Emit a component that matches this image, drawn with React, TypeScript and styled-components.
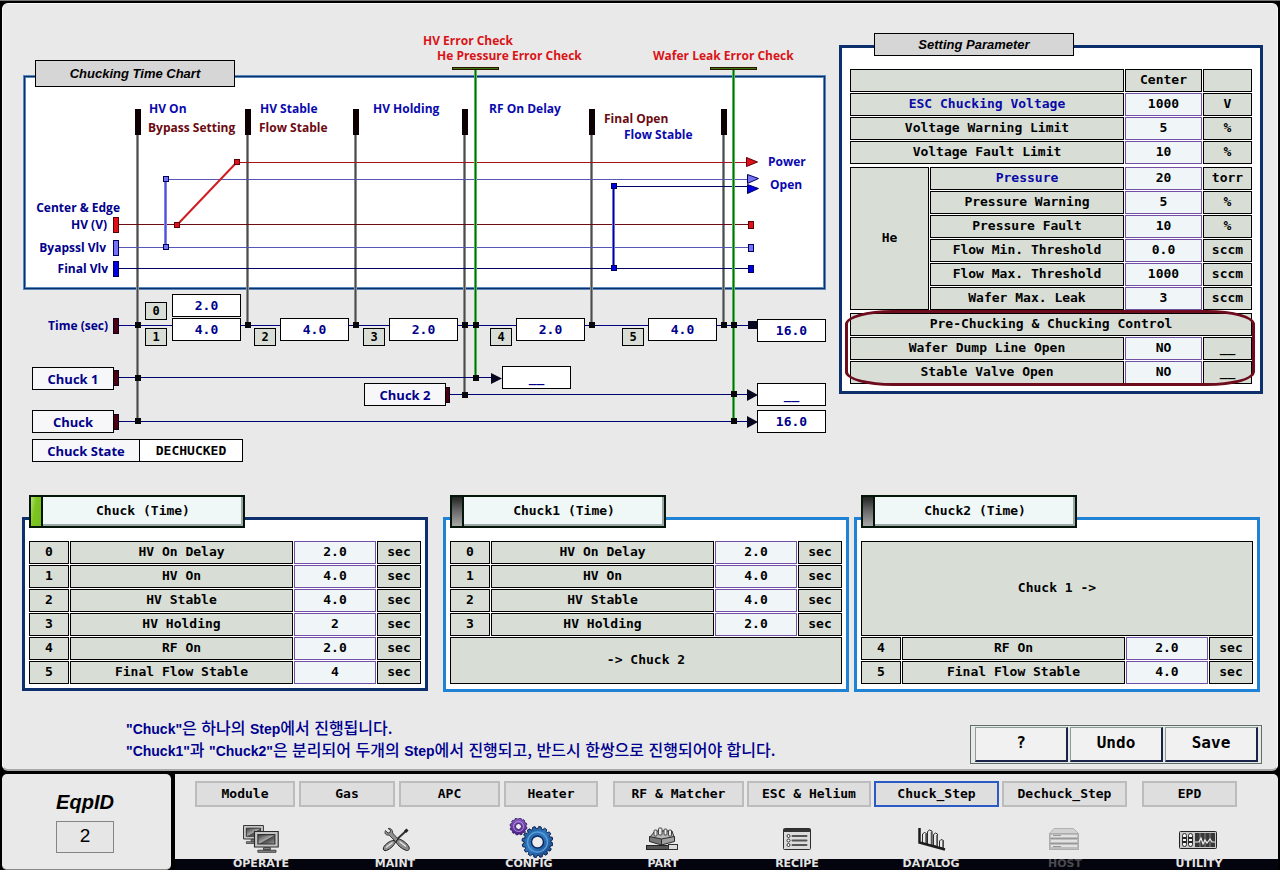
import React from "react";
import styled, { createGlobalStyle } from "styled-components";

const mono = `"DejaVu Sans Mono", "Liberation Mono", monospace`;
const sans = `"Liberation Sans", Arial, sans-serif`;
const label = `"Open Sans", "Noto Sans", sans-serif`;

const navy = "#0d2f6b";
const ink = "#00008b";

const GlobalStyle = createGlobalStyle`
  *, *::before, *::after { box-sizing: border-box; }
  body { margin: 0; background: #000; color: #000; font-family: ${mono}; }
  button, input { font: inherit; color: inherit; margin: 0; }
`;

const Screen = styled.div`
  display: flex;
  flex-direction: column;
  gap: 3px;
  min-height: 100vh;
  padding: 2px 2px 0;
  border-top: 1px solid #777;
`;

const Main = styled.main`
  flex: 1;
  display: flex;
  flex-direction: column;
  padding: 26px 0 5px;
  border-radius: 6px;
  border: 1px solid #f8f8f8;
  border-bottom: 2px solid #a8a8a8;
  background: #e9e9e9;
`;

const TopRow = styled.div`
  display: flex;
  align-items: flex-start;
  gap: 11px;
  padding: 0 14px 0 19px;
`;

/* ---------- time chart ---------- */

const Canvas = styled.section`
  position: relative;
  flex: 0 0 806px;
  height: 440px;
`;

const Caption = styled.h2<{ $tall?: boolean }>`
  margin: 0;
  display: flex;
  align-items: center;
  justify-content: center;
  width: 200px;
  height: ${(p) => (p.$tall ? 27 : 23)}px;
  border: 1px solid #000;
  background: #d6d6d6;
  font: italic bold 13px ${sans};
`;

const ChartCaption = styled(Caption)`
  position: absolute;
  left: 13px;
  top: 30px;
`;

const ChartFrame = styled.div`
  position: absolute;
  left: 2px;
  top: 46px;
  width: 801px;
  height: 213px;
  border: 1px solid #0a3068;
  box-shadow: 0 0 0 1px #5b87bd, inset 0 0 0 1px #5b87bd;
  background: #fff;
`;

const Drawing = styled.svg`
  position: absolute;
  inset: 0;
  width: 806px;
  height: 440px;
`;

const Note = styled.span<{ $x: number; $y: number; $color?: string; $end?: boolean }>`
  position: absolute;
  left: ${(p) => p.$x - 22}px;
  top: ${(p) => p.$y - 38}px;
  transform: ${(p) => (p.$end ? "translateX(-100%)" : "none")};
  font: bold 12px/16px ${label};
  white-space: nowrap;
  color: ${(p) => p.$color ?? ink};
`;

const Tile = styled.div<{ $x: number; $y: number; $w?: number }>`
  position: absolute;
  left: ${(p) => p.$x - 22}px;
  top: ${(p) => p.$y - 30}px;
  width: ${(p) => p.$w ?? 69}px;
  height: 23px;
  display: flex;
  align-items: center;
  justify-content: center;
  border: 1px solid #000;
  background: #fff;
`;

const TimeTile = styled(Tile)`
  color: ${ink};
  font: bold 13px ${mono};
`;

const StateTile = styled(Tile)`
  font: bold 13px ${mono};
`;

const NameTile = styled(Tile)`
  background: #f7f7f9;
  color: ${ink};
  font: bold 13px ${label};
`;

const StepTile = styled(Tile)`
  width: 22px;
  height: 18px;
  background: #d8ded6;
  font: bold 12px ${mono};
`;

const posts = [
  { x: 138, end: 421 },
  { x: 248, end: 325 },
  { x: 356, end: 325 },
  { x: 465, end: 395 },
  { x: 592, end: 325 },
  { x: 724, end: 325 },
];

const joints: [number, number][] = [
  [138, 325], [248, 325], [356, 325], [465, 325], [476, 325], [592, 325], [724, 325], [734, 325],
  [138, 378], [476, 378], [465, 395], [734, 394], [138, 421], [734, 421],
];

const Lines = () => (
  <Drawing viewBox="22 30 806 440" aria-hidden="true">
    {posts.map((p) => (
      <g key={p.x}>
        <rect x={p.x - 2} y={135} width={3} height={p.end - 135} fill="#8d8d8d" />
        <rect x={p.x - 1} y={135} width={1} height={p.end - 135} fill="#4c4c4c" />
        <rect x={p.x - 3} y={109} width={6} height={26} fill="#0c0003" />
      </g>
    ))}
    <g shapeRendering="crispEdges">
      <rect x={119} y={325} width={629} height={1} fill="#000080" />
      <rect x={119} y={377} width={373} height={1} fill="#000070" />
      <rect x={450} y={394} width={300} height={1} fill="#000070" />
      <rect x={119} y={421} width={630} height={1} fill="#000070" />
      <rect x={237} y={162} width={510} height={1} fill="#a8141c" />
      <rect x={119} y={224} width={629} height={1} fill="#6b0c14" />
      <rect x={166} y={179} width={582} height={1} fill="#5656b4" />
      <rect x={119} y={247} width={629} height={1} fill="#5656b4" />
      <rect x={614} y={186} width={134} height={1} fill="#000068" />
      <rect x={119} y={268} width={629} height={1} fill="#000060" />
      <rect x={164} y={180} width={3} height={67} fill="#7f7fee" />
      <rect x={165} y={180} width={1} height={67} fill="#5252cc" />
      <rect x={612} y={187} width={3} height={81} fill="#6f6fd6" />
      <rect x={613} y={187} width={1} height={81} fill="#0000a0" />
    </g>
    <path d="M177 225 237 162" stroke="#cf1c22" strokeWidth="2" />
    {[
      { x: 475, end: 378, cap: 452 },
      { x: 733, end: 421, cap: 710 },
    ].map((g) => (
      <g key={g.x}>
        <rect x={g.x - 1} y={69} width={3} height={g.end - 69} fill="#55b455" />
        <rect x={g.x} y={69} width={1} height={g.end - 69} fill="#00720c" />
        <rect x={g.cap} y={67} width={47} height={3} fill="#2a1400" />
        <rect x={g.cap + 1} y={68} width={45} height={1} fill="#3d7a10" />
      </g>
    ))}
    <g stroke="#5a0008" fill="#e0101a">
      <rect x={234.5} y={159.5} width={5} height={5} />
      <rect x={174.5} y={222.5} width={5} height={5} />
      <rect x={113.5} y={217.5} width={5} height={15} />
      <rect x={748.5} y={221.5} width={5} height={7} />
      <path d="M746.5 157.5 757.5 162 746.5 166.5Z" />
    </g>
    <g stroke="#00005c" fill="#7474f4">
      <rect x={163.5} y={176.5} width={5} height={5} />
      <rect x={163.5} y={244.5} width={5} height={5} />
      <rect x={113.5} y={240.5} width={5} height={15} />
      <rect x={748.5} y={244.5} width={5} height={7} />
      <path d="M747.5 174.5 758.5 178.5 747.5 183.5Z" />
    </g>
    <g stroke="#00005c" fill="#0000e0">
      <rect x={611.5} y={183.5} width={5} height={5} />
      <rect x={611.5} y={265.5} width={5} height={5} />
      <rect x={113.5} y={261.5} width={5} height={15} />
      <rect x={748.5} y={265.5} width={5} height={7} />
      <path d="M747.5 184.5 758.5 188.5 747.5 193.5Z" />
    </g>
    <g stroke="#10001c" fill="#4a0010">
      <rect x={113.5} y={318.5} width={5} height={15} />
      <rect x={113.5} y={370.5} width={5} height={15} />
      <rect x={113.5} y={414.5} width={5} height={15} />
      <rect x={445.5} y={387.5} width={4} height={15} />
    </g>
    <g fill="#07071f">
      <rect x={748} y={321} width={9} height={8} />
      <path d="M491 373 502 378.5 491 384Z" />
      <path d="M747 389 758 395 747 401Z" />
      <path d="M747 416 758 422 747 428Z" />
      {joints.map(([x, y]) => (
        <rect key={`${x}-${y}`} x={x - 3} y={y - 3} width={6} height={6} fill="#080808" />
      ))}
    </g>
  </Drawing>
);

const blue = "#0909ae";
const maroon = "#6b0a10";
const red = "#d91418";

const TimeChart = () => (
  <Canvas aria-label="Chucking Time Chart">
    <ChartFrame />
    <ChartCaption $tall>Chucking Time Chart</ChartCaption>
    <Lines />
    <Note $x={423} $y={41} $color={red}>HV Error Check</Note>
    <Note $x={437} $y={56} $color={red}>He Pressure Error Check</Note>
    <Note $x={653} $y={56} $color={red}>Wafer Leak Error Check</Note>
    <Note $x={149} $y={109} $color={blue}>HV On</Note>
    <Note $x={148} $y={128} $color={maroon}>Bypass Setting</Note>
    <Note $x={260} $y={109} $color={blue}>HV Stable</Note>
    <Note $x={259} $y={128} $color={maroon}>Flow Stable</Note>
    <Note $x={373} $y={109} $color={blue}>HV Holding</Note>
    <Note $x={489} $y={109} $color={blue}>RF On Delay</Note>
    <Note $x={604} $y={119} $color={maroon}>Final Open</Note>
    <Note $x={624} $y={135} $color={blue}>Flow Stable</Note>
    <Note $x={768} $y={162} $color={blue}>Power</Note>
    <Note $x={770} $y={185} $color={blue}>Open</Note>
    <Note $x={120} $y={208} $end>Center &amp; Edge</Note>
    <Note $x={107} $y={225} $end>HV (V)</Note>
    <Note $x={106} $y={248} $end>Byapssl Vlv</Note>
    <Note $x={108} $y={269} $end>Final Vlv</Note>
    <Note $x={108} $y={326} $end>Time (sec)</Note>

    <StepTile $x={145} $y={302}>0</StepTile>
    <StepTile $x={145} $y={328}>1</StepTile>
    <StepTile $x={254} $y={328}>2</StepTile>
    <StepTile $x={363} $y={328}>3</StepTile>
    <StepTile $x={490} $y={328}>4</StepTile>
    <StepTile $x={622} $y={328}>5</StepTile>
    <TimeTile $x={172} $y={294}>2.0</TimeTile>
    <TimeTile $x={172} $y={318}>4.0</TimeTile>
    <TimeTile $x={280} $y={318}>4.0</TimeTile>
    <TimeTile $x={389} $y={318}>2.0</TimeTile>
    <TimeTile $x={516} $y={318}>2.0</TimeTile>
    <TimeTile $x={648} $y={318}>4.0</TimeTile>
    <TimeTile $x={757} $y={319}>16.0</TimeTile>
    <TimeTile $x={502} $y={366}>__</TimeTile>
    <TimeTile $x={757} $y={383}>__</TimeTile>
    <TimeTile $x={757} $y={410}>16.0</TimeTile>
    <NameTile $x={32} $y={367} $w={82}>Chuck 1</NameTile>
    <NameTile $x={364} $y={383} $w={82}>Chuck 2</NameTile>
    <NameTile $x={32} $y={410} $w={82}>Chuck</NameTile>
    <NameTile $x={32} $y={439} $w={108}>Chuck State</NameTile>
    <StateTile $x={139} $y={439} $w={104}>DECHUCKED</StateTile>
  </Canvas>
);

/* ---------- tables ---------- */

const Frame = styled.section<{ $color: string }>`
  position: relative;
  border: 3px solid ${(p) => p.$color};
  background: #fff;
`;

const Table = styled.table`
  width: 100%;
  table-layout: fixed;
  border-collapse: separate;
  border-spacing: 1px;
  font: bold 13px ${mono};
`;

const Cell = styled.td<{ $accent?: boolean }>`
  height: 23px;
  padding: 0 0 2px;
  border: 1px solid #000;
  background: #d8ded6;
  color: ${(p) => (p.$accent ? "#0a0aa8" : "#000")};
  font-weight: bold;
  line-height: 16px;
  text-align: center;
`;

const Plain = styled.td`
  padding: 0;
  height: 23px;
`;

const Field = styled.input`
  display: block;
  width: 100%;
  height: 23px;
  padding: 0 0 2px;
  border: 1px solid #7450a4;
  border-radius: 0;
  background: #f0f6f8;
  text-align: center;
`;

const ValueCell = ({ name, value }: { name: string; value: string }) => (
  <Plain>
    <Field aria-label={name} defaultValue={value} />
  </Plain>
);

const ParamFrame = styled(Frame)`
  flex: 1;
  margin-top: 15px;
  padding: 20px 7px 6px;
`;

const ParamCaption = styled(Caption)`
  position: absolute;
  left: 32px;
  top: -15px;
`;

const Stack = styled.div`
  display: flex;
  flex-direction: column;
  gap: 1px;
`;

const Ringed = styled.div`
  position: relative;

  &::after {
    content: "";
    position: absolute;
    inset: -2px -2px -1px -4px;
    border: 3px solid #6e0b1c;
    border-radius: 48px / 14px;
    pointer-events: none;
  }
`;

type Param = { name: string; value: string; unit: string; accent?: boolean };

const voltage: Param[] = [
  { name: "ESC Chucking Voltage", value: "1000", unit: "V", accent: true },
  { name: "Voltage Warning Limit", value: "5", unit: "%" },
  { name: "Voltage Fault Limit", value: "10", unit: "%" },
];

const helium: Param[] = [
  { name: "Pressure", value: "20", unit: "torr", accent: true },
  { name: "Pressure Warning", value: "5", unit: "%" },
  { name: "Pressure Fault", value: "10", unit: "%" },
  { name: "Flow Min. Threshold", value: "0.0", unit: "sccm" },
  { name: "Flow Max. Threshold", value: "1000", unit: "sccm" },
  { name: "Wafer Max. Leak", value: "3", unit: "sccm" },
];

const control: Param[] = [
  { name: "Wafer Dump Line Open", value: "NO", unit: "__" },
  { name: "Stable Valve Open", value: "NO", unit: "__" },
];

const ParamCells = ({ p }: { p: Param }) => (
  <>
    <Cell as="th" scope="row" $accent={p.accent}>{p.name}</Cell>
    <ValueCell name={p.name} value={p.value} />
    <Cell>{p.unit}</Cell>
  </>
);

const Widths = ({ of }: { of: (number | undefined)[] }) => (
  <colgroup>
    {of.map((w, i) => (
      <col key={i} width={w} />
    ))}
  </colgroup>
);

const Parameters = () => (
  <ParamFrame $color={navy}>
    <ParamCaption>Setting Parameter</ParamCaption>
    <Stack>
      <Table>
        <Widths of={[undefined, 77, 49]} />
        <thead>
          <tr>
            <Cell />
            <Cell as="th" scope="col">Center</Cell>
            <Cell />
          </tr>
        </thead>
        <tbody>
          {voltage.map((p) => (
            <tr key={p.name}><ParamCells p={p} /></tr>
          ))}
        </tbody>
      </Table>
      <Table>
        <Widths of={[79, undefined, 77, 49]} />
        <tbody>
          {helium.map((p, i) => (
            <tr key={p.name}>
              {i === 0 && <Cell as="th" scope="rowgroup" rowSpan={helium.length}>He</Cell>}
              <ParamCells p={p} />
            </tr>
          ))}
        </tbody>
      </Table>
      <Ringed>
        <Table>
          <Widths of={[undefined, 77, 49]} />
          <thead>
            <tr>
              <Cell as="th" colSpan={3}>Pre-Chucking &amp; Chucking Control</Cell>
            </tr>
          </thead>
          <tbody>
            {control.map((p) => (
              <tr key={p.name}><ParamCells p={p} /></tr>
            ))}
          </tbody>
        </Table>
      </Ringed>
    </Stack>
  </ParamFrame>
);

/* ---------- chuck step panels ---------- */

const Panels = styled.div`
  display: flex;
  align-items: flex-start;
  gap: 5px;
  margin-top: 47px;
  padding: 0 17px 0 19px;
`;

const StepFrame = styled(Frame)<{ $active?: boolean }>`
  flex: 1;
  margin-right: ${(p) => (p.$active ? 10 : 0)}px;
  padding: 20px 3px ${(p) => (p.$active ? 3 : 4)}px;
`;

const Tab = styled.button`
  position: absolute;
  left: 4px;
  top: -25px;
  display: flex;
  width: 216px;
  height: 33px;
  padding: 0;
  border: 2px solid #04150a;
  background: #04150a;
  gap: 2px;
  font: bold 13px ${mono};
`;

const Lamp = styled.span<{ $on?: boolean }>`
  width: 10px;
  height: 29px;
  background: ${(p) =>
    p.$on
      ? "linear-gradient(100deg, #b6e07a, #7cc61e 40%, #78bc20)"
      : "linear-gradient(#222, #666 45%, #a8a8a8)"};
`;

const Face = styled.span`
  flex: 1;
  height: 29px;
  padding-left: 2px;
  border-right: 2px solid #9ca8a8;
  border-bottom: 2px solid #9ca8a8;
  background: #f0f7f7;
  line-height: 28px;
  text-align: center;
`;

type Step = { no: number; name: string; value: string };

const StepRow = ({ s }: { s: Step }) => (
  <tr>
    <Cell>{s.no}</Cell>
    <Cell as="th" scope="row">{s.name}</Cell>
    <ValueCell name={s.name} value={s.value} />
    <Cell>sec</Cell>
  </tr>
);

const Block = styled(Cell)<{ $rows: number }>`
  height: ${(p) => p.$rows * 24 - 1}px;
`;

type StepPanelProps = {
  title: string;
  active?: boolean;
  steps: Step[];
  before?: { text: string; rows: number };
  after?: { text: string; rows: number };
};

const StepPanel = ({ title, active, steps, before, after }: StepPanelProps) => (
  <StepFrame $color={active ? navy : "#1f82d4"} $active={active}>
    <Tab type="button" aria-pressed={!!active}>
      <Lamp $on={active} />
      <Face>{title}</Face>
    </Tab>
    <Table>
      <Widths of={[40, undefined, 82, 44]} />
      <tbody>
        {before && <tr><Block colSpan={4} $rows={before.rows}>{before.text}</Block></tr>}
        {steps.map((s) => <StepRow key={s.no} s={s} />)}
        {after && <tr><Block colSpan={4} $rows={after.rows}>{after.text}</Block></tr>}
      </tbody>
    </Table>
  </StepFrame>
);

/* ---------- footer of the main pane ---------- */

const Foot = styled.div`
  display: flex;
  justify-content: space-between;
  align-items: flex-start;
  margin-top: 24px;
  padding: 0 15px 0 123px;
`;

const Message = styled.p`
  margin: 0;
  color: #00008f;
  font: 500 16px/22px "Noto Sans CJK KR", sans-serif;

  b {
    font: bold 14px/14px ${sans};
  }
`;

const Actions = styled.div`
  display: flex;
  gap: 2px;
  margin-top: 9px;
  padding: 1px 3px 1px 4px;
  border: 1px solid #5d6f68;
`;

const Action = styled.button`
  width: 93px;
  height: 35px;
  padding: 0 0 3px;
  border: 1px solid #8b9e95;
  border-right: 2px solid #1a2348;
  border-bottom: 2px solid #1a2348;
  background: #f1f1f1;
  font: bold 16px ${mono};
`;

/* ---------- bottom bar ---------- */

const Bottom = styled.footer`
  display: flex;
  gap: 4px;
  height: 96px;
`;

const Equipment = styled.div`
  flex: 0 0 169px;
  display: flex;
  flex-direction: column;
  align-items: center;
  gap: 7px;
  padding: 16px 3px 0 0;
  border-radius: 5px;
  border-bottom: 1px solid #888;
  background: #e9e9e9;
  font-family: ${sans};

  label {
    font: italic bold 20px/24px ${sans};
  }

  input {
    width: 58px;
    height: 32px;
    padding: 0 0 3px;
    border: 1px solid #858585;
    border-radius: 0;
    background: #e6e6e6;
    font-size: 19px;
    text-align: center;
  }
`;

const Nav = styled.nav`
  flex: 1;
  display: flex;
  flex-direction: column;
  justify-content: space-between;
  padding-top: 7px;
  border-top-right-radius: 5px;
  background: linear-gradient(to top, #04040f 11px, #e9e9e9 11px);
`;

const SubNav = styled.div`
  display: flex;
  gap: 15px;
  padding: 0 20px;
`;

const Group = styled.div<{ $gap: number }>`
  display: flex;
  gap: ${(p) => p.$gap}px;
`;

const SubButton = styled.button<{ $w: number; $current?: boolean }>`
  width: ${(p) => p.$w}px;
  height: 26px;
  padding: 0 0 2px;
  border: 2px solid ${(p) => (p.$current ? "#2a5ac2" : "#bcbcbc")};
  background: #dedede;
  font: bold 13px ${mono};
  white-space: nowrap;
`;

const MainNav = styled.div`
  display: grid;
  grid-template-columns: repeat(8, 1fr);
  padding: 0 12px 0 19px;
`;

const NavItem = styled.button<{ $dim?: boolean }>`
  display: flex;
  flex-direction: column;
  align-items: center;
  height: 52px;
  padding: 0 0 1px;
  border: 0;
  background: none;
  color: ${(p) => (p.$dim ? "#4a4a4e" : "#e4e4e4")};
  font: bold 11px/11px "DejaVu Sans", sans-serif;

  svg {
    width: 48px;
    height: 40px;
  }
`;

const gear = (cx: number, cy: number, teeth: number, outer: number, inner: number) => {
  const pts: string[] = [];
  for (let i = 0; i < teeth; i++) {
    [[0.05, inner], [0.2, outer], [0.6, outer], [0.75, inner]].forEach(([f, r]) => {
      const a = ((i + f) / teeth) * Math.PI * 2;
      pts.push(`${(cx + Math.cos(a) * r).toFixed(1)} ${(cy + Math.sin(a) * r).toFixed(1)}`);
    });
  }
  return `M${pts.join("L")}Z`;
};

const Monitor = () => (
  <>
    <path d="M0 0h21v15h-21z" fill="#c4c4c4" stroke="#2c2c2c" />
    <path d="M3 3h15v9h-15z" fill="url(#glass)" stroke="#333" />
    <path d="M8 15.500h6v2h-6zM3 18h16v2h-16z" fill="#8a8a8a" stroke="#333" strokeWidth=".8" />
  </>
);

const OperateIcon = () => (
  <svg viewBox="0 0 48 40" aria-hidden="true">
    <defs>
      <linearGradient id="glass" x2="1" y2="1">
        <stop offset="0" stopColor="#3a3a3a" />
        <stop offset=".5" stopColor="#a6a6a6" />
        <stop offset=".55" stopColor="#4a4a4a" />
        <stop offset="1" stopColor="#999" />
      </linearGradient>
    </defs>
    <g transform="translate(6.500 7.500) scale(.95 .9)"><Monitor /></g>
    <g transform="translate(17.500 13.500) scale(1.130 1.040)"><Monitor /></g>
  </svg>
);

const MaintIcon = () => (
  <svg viewBox="0 0 48 40" aria-hidden="true">
    <path d="M36 12 22 25" stroke="#333" strokeWidth="2" />
    <path d="M36.500 11.500 34 14" stroke="#222" strokeWidth="3" />
    <path d="M23 22.500c-3-.5-9 3.500-10.500 7-.8 2.300.8 3.800 3 3 3.600-1.300 7.800-5 9-8.500z" fill="#8f8f8f" stroke="#222" />
    <path d="M15 29.500 21.500 24.500" stroke="#e0e0e0" strokeWidth="1.500" />
    <path d="M14.500 12.500 17 15l2-.5.500-2.500-2.500-1.500c2.500-.6 5 1.200 4.600 4.500L27 21l-2.500 2.500-6.500-6.500c-3 .6-5-1.500-3.500-4.500z" fill="#8f8f8f" stroke="#333" strokeWidth=".9" />
    <path d="M27 21c3.500 0 9 4 11 8 1 2.500-.8 4.200-3.200 3.300-4-1.500-8.300-5-9.800-8.300z" fill="#8a8a8a" stroke="#222" />
    <path d="M28.500 23.500 35 28.500" stroke="#e4e4e4" strokeWidth="1.500" />
  </svg>
);

const ConfigIcon = () => (
  <svg viewBox="0 0 48 40" aria-hidden="true">
    <defs>
      <linearGradient id="steel" x2="1" y2="1">
        <stop offset="0" stopColor="#1c5690" />
        <stop offset=".5" stopColor="#2f78c0" />
        <stop offset="1" stopColor="#123a78" />
      </linearGradient>
      <linearGradient id="violet" x2="0" y2="1">
        <stop offset="0" stopColor="#8a62c2" />
        <stop offset="1" stopColor="#4b1f8a" />
      </linearGradient>
    </defs>
    <path d={gear(13.5, 8.5, 12, 8.5, 7.5)} fill="url(#violet)" stroke="#2d0f5c" strokeWidth=".8" />
    <circle cx="13.500" cy="8.500" r="5" fill="none" stroke="#b48ce0" strokeWidth="1" />
    <circle cx="13.500" cy="8.500" r="3" fill="#eee" stroke="#35146a" />
    <path d={gear(32.5, 24, 16, 15.5, 13.5)} fill="url(#steel)" stroke="#0a1f4e" strokeWidth="1" />
    <circle cx="32.500" cy="24" r="10" fill="none" stroke="#5a9ad8" strokeWidth="1.500" />
    <circle cx="32.500" cy="24" r="6" fill="#ececec" stroke="#0c2a60" strokeWidth="1.500" />
  </svg>
);

const PartIcon = () => (
  <svg viewBox="0 0 48 40" aria-hidden="true">
    <path d="M11 19 16 13 33 13 35 19 23 23Z" fill="#b8b8b8" stroke="#333" />
    <g fill="#eaeaea" stroke="#333" strokeWidth=".9">
      <rect x="15" y="12" width="3" height="6" rx="1" />
      <rect x="19.500" y="10" width="3.500" height="7" rx="1" />
      <rect x="25" y="11" width="3" height="6" rx="1" />
      <rect x="29.500" y="12" width="3" height="6" rx="1" />
    </g>
    <path d="M10.500 18.500 22.500 21v6L10.500 23.500Z" fill="#777" stroke="#2a2a2a" />
    <path d="M22.500 21 35.500 18.500v5L22.500 27Z" fill="#a0a0a0" stroke="#2a2a2a" />
    <rect x="7.500" y="27.500" width="22" height="4" fill="#555" stroke="#222" />
    <rect x="29.500" y="26.500" width="9" height="5" fill="#ddd" stroke="#333" />
  </svg>
);

const RecipeIcon = () => (
  <svg viewBox="0 0 48 40" aria-hidden="true">
    <rect x="10.500" y="10.500" width="27" height="21" rx="1" fill="#dcdcdc" stroke="#2c2c2c" />
    <path d="M10.500 12.500h27" stroke="#333" strokeWidth="3" />
    <path d="M19.500 18h14M19.500 22.500h14M19.500 27h14" stroke="#555" strokeWidth="2" strokeLinecap="round" />
    <g fill="#fff" stroke="#333">
      <circle cx="15.500" cy="18" r="1.500" />
      <circle cx="15.500" cy="22.500" r="1.500" />
      <circle cx="15.500" cy="27" r="1.500" />
    </g>
  </svg>
);

const DatalogIcon = () => (
  <svg viewBox="0 0 48 40" aria-hidden="true">
    <g fill="#e8e8e8" stroke="#2c2c2c">
      <path d="M15.500 25v-9l2-1.500 2 1v10.500z" />
      <path d="M20.500 26.500v-13l2-1.500 2.500 1v14.500z" />
      <path d="M26.500 27.500v-11l2-1.500 2 1v12.500z" />
      <path d="M32.500 29v-6l1.500-1.500 2.500 1v8z" />
    </g>
    <path d="M19 16v9.500M24.500 14v13M30 17v11M36 23v7" stroke="#555" strokeWidth="1.500" />
    <path d="M12.500 10v14.500L38 31.500" fill="none" stroke="#1c1c1c" strokeWidth="2.500" />
  </svg>
);

const HostIcon = () => (
  <svg viewBox="0 0 48 40" aria-hidden="true">
    <path d="M8.500 15.500 13 10.500h19.500L37.500 15.500Z" fill="#d2d2d2" stroke="#b2b2b2" />
    <rect x="8.500" y="15.500" width="29" height="16" fill="#bdbdbd" stroke="#adadad" />
    <path d="M10 18h26M10 23h26M10 28h26" stroke="#e2e2e2" strokeWidth="2" />
    <path d="M9 20.500h28M9 25.500h28M12 17.500h8M12 28.500h8" stroke="#989898" />
  </svg>
);

const UtilityIcon = () => (
  <svg viewBox="0 0 48 40" aria-hidden="true">
    <rect x="4.500" y="13.500" width="37" height="17" rx="1" fill="#c9c9c9" stroke="#222" />
    <rect x="20" y="15" width="20" height="14" fill="#383838" />
    <path d="M25 15v14M30 15v14M35 15v14" stroke="#888" />
    <path d="M20 24h4l2-4 2 6 2-4 2 3 3-4 2 3h3" fill="none" stroke="#f0f0f0" strokeWidth="1.200" />
    <g fill="#f4f4f4" stroke="#2c2c2c">
      <rect x="7.500" y="15.500" width="4" height="13" rx="2" />
      <rect x="13.500" y="15.500" width="4" height="13" rx="2" />
    </g>
    <path d="M8 20h3M8 24h3M14 20h3M14 24h3" stroke="#222" strokeWidth="2" />
  </svg>
);

const mainNav = [
  { name: "OPERATE", Icon: OperateIcon },
  { name: "MAINT", Icon: MaintIcon },
  { name: "CONFIG", Icon: ConfigIcon },
  { name: "PART", Icon: PartIcon },
  { name: "RECIPE", Icon: RecipeIcon },
  { name: "DATALOG", Icon: DatalogIcon },
  { name: "HOST", Icon: HostIcon, dim: true },
  { name: "UTILITY", Icon: UtilityIcon },
];

const subNav = [
  {
    gap: 4,
    items: [
      { name: "Module", w: 100 },
      { name: "Gas", w: 96 },
      { name: "APC", w: 101 },
      { name: "Heater", w: 94 },
    ],
  },
  {
    gap: 3,
    items: [
      { name: "RF & Matcher", w: 131 },
      { name: "ESC & Helium", w: 124 },
      { name: "Chuck_Step", w: 125, current: true },
      { name: "Dechuck_Step", w: 125 },
    ],
  },
  { gap: 3, items: [{ name: "EPD", w: 95 }] },
] as { gap: number; items: { name: string; w: number; current?: boolean }[] }[];

export default function App() {
  return (
    <>
      <GlobalStyle />
      <Screen>
        <Main>
          <TopRow>
            <TimeChart />
            <Parameters />
          </TopRow>
          <Panels>
            <StepPanel
              title="Chuck (Time)"
              active
              steps={[
                { no: 0, name: "HV On Delay", value: "2.0" },
                { no: 1, name: "HV On", value: "4.0" },
                { no: 2, name: "HV Stable", value: "4.0" },
                { no: 3, name: "HV Holding", value: "2" },
                { no: 4, name: "RF On", value: "2.0" },
                { no: 5, name: "Final Flow Stable", value: "4" },
              ]}
            />
            <StepPanel
              title="Chuck1 (Time)"
              steps={[
                { no: 0, name: "HV On Delay", value: "2.0" },
                { no: 1, name: "HV On", value: "4.0" },
                { no: 2, name: "HV Stable", value: "4.0" },
                { no: 3, name: "HV Holding", value: "2.0" },
              ]}
              after={{ text: "-> Chuck 2", rows: 2 }}
            />
            <StepPanel
              title="Chuck2 (Time)"
              before={{ text: "Chuck 1 ->", rows: 4 }}
              steps={[
                { no: 4, name: "RF On", value: "2.0" },
                { no: 5, name: "Final Flow Stable", value: "4.0" },
              ]}
            />
          </Panels>
          <Foot>
            <Message lang="ko">
              <b>"Chuck"</b>은 하나의 <b>Step</b>에서 진행됩니다.
              <br />
              <b>"Chuck1"</b>과 <b>"Chuck2"</b>은 분리되어 두개의 <b>Step</b>에서 진행되고, 반드시 한쌍으로 진행되어야 합니다.
            </Message>
            <Actions>
              <Action type="button">?</Action>
              <Action type="button">Undo</Action>
              <Action type="button">Save</Action>
            </Actions>
          </Foot>
        </Main>
        <Bottom>
          <Equipment>
            <label htmlFor="eqp">EqpID</label>
            <input id="eqp" defaultValue="2" />
          </Equipment>
          <Nav>
            <SubNav>
              {subNav.map((g) => (
                <Group key={g.items[0].name} $gap={g.gap}>
                  {g.items.map((b) => (
                    <SubButton key={b.name} type="button" $w={b.w} $current={b.current}>
                      {b.name}
                    </SubButton>
                  ))}
                </Group>
              ))}
            </SubNav>
            <MainNav>
              {mainNav.map(({ name, Icon, dim }) => (
                <NavItem key={name} type="button" $dim={dim}>
                  <Icon />
                  {name}
                </NavItem>
              ))}
            </MainNav>
          </Nav>
        </Bottom>
      </Screen>
    </>
  );
}
